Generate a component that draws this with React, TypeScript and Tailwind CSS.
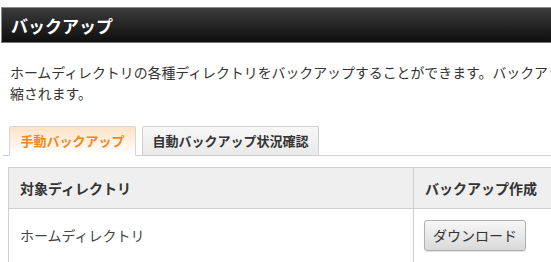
export default function App() {
  return (
    <div
      className="w-[551px] h-[262px] overflow-hidden bg-white text-[#333]"
      style={{ fontFamily: '"Noto Sans CJK JP", "Noto Sans", sans-serif' }}
    >
      {/* Title bar */}
      <div className="pt-[7px]">
        <div className="ml-[1px] flex h-[36px] items-center border-t border-l border-[#8a8a8a] bg-gradient-to-b from-[#3c3c3c] to-[#0f0f0f] px-[9px] border-b border-b-[#777]">
          <span className="text-[17px] font-bold leading-none text-white">バックアップ</span>
        </div>
      </div>

      {/* Description */}
      <div className="mt-[19px] overflow-hidden px-[10px]">
        <p className="text-[13.9px] leading-[21px] text-[#333] whitespace-nowrap">
          ホームディレクトリの各種ディレクトリをバックアップすることができます。バックアップファイルは圧
          <br />
          縮されます。
        </p>
      </div>

      {/* Tabs */}
      <div className="ml-[3px] mt-[22px] flex items-end gap-[6px] border-b border-[#cfcfcf] pl-[6px]">
        <div className="-mb-px flex h-[30px] w-[127px] items-center justify-center rounded-t-[2px] border border-[#d6d6d6] border-b-white bg-gradient-to-b from-[#fde3c6] to-white text-[13px] font-bold text-[#f0891e]">
          手動バックアップ
        </div>
        <div className="flex h-[29px] w-[177px] items-center justify-center rounded-t-[2px] border border-b-0 border-[#d0d0d0] bg-gradient-to-b from-[#f7f7f7] to-[#e9e9e9] text-[13px] font-bold text-[#333]">
          自動バックアップ状況確認
        </div>
      </div>

      {/* Table */}
      <div className="ml-[8px] mt-[11px] w-[560px] border border-[#cfcfcf]">
        <div className="flex h-[41px] border-b border-[#cfcfcf] bg-[#efefef] text-[14px] font-bold text-[#333]">
          <div className="flex w-[405px] items-center border-r border-[#cfcfcf] px-[11px]">対象ディレクトリ</div>
          <div className="flex flex-1 items-center px-[11px]">バックアップ作成</div>
        </div>
        <div className="flex h-[53px] text-[14px] text-[#444]">
          <div className="flex w-[405px] items-center border-r border-[#cfcfcf] px-[11px]">ホームディレクトリ</div>
          <div className="flex flex-1 items-center px-[10px]">
            <button className="h-[31px] w-[102px] rounded-[3px] border border-[#b0b0b0] bg-gradient-to-b from-[#f7f7f7] to-[#d9d9d9] text-[14px] text-[#333] shadow-[0_1px_1px_rgba(0,0,0,0.12)]">
              ダウンロード
            </button>
          </div>
        </div>
      </div>
    </div>
  );
}
